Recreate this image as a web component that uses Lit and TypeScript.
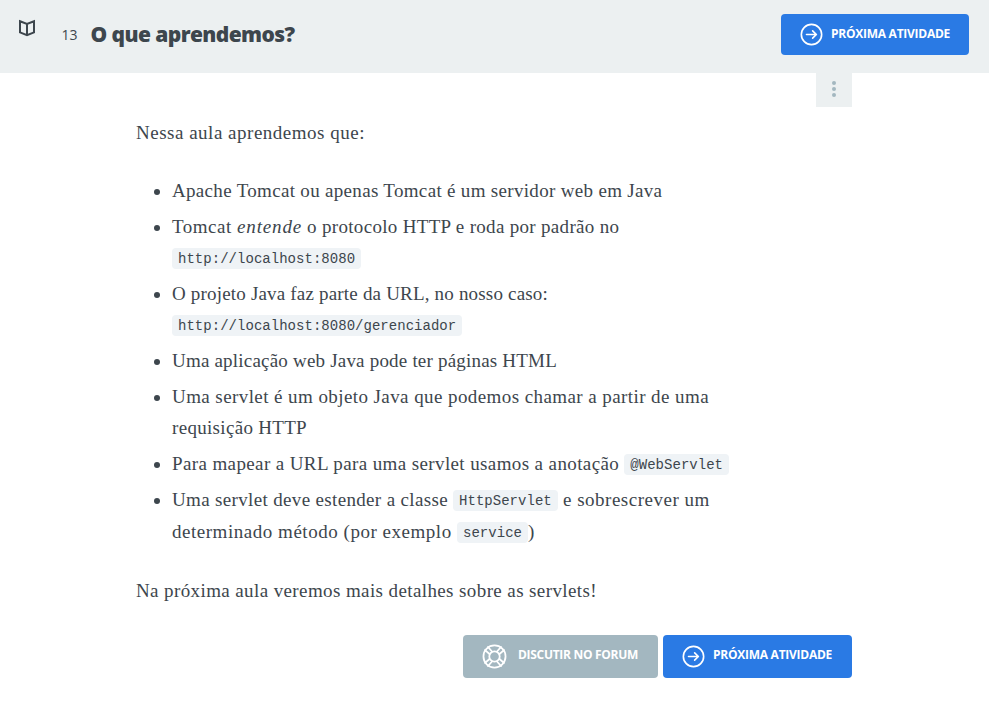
import { LitElement, html, svg, css } from "lit";
import { customElement, property } from "lit/decorators.js";
import { styleMap } from "lit/directives/style-map.js";

const ctx = document.createElement("canvas").getContext("2d")!;
const SERIF = '19px "Liberation Serif"';
const SERIF_ITALIC = 'italic 19px "Liberation Serif"';
const BUTTON = '700 12px "Open Sans"';
const TITLE = '800 21px "Open Sans"';

/** Tracking that makes a run of text as wide as its column slot. */
function tracking(text: string, width: number, font: string) {
  ctx.font = font;
  return { letterSpacing: `${((width - ctx.measureText(text).width) / text.length).toFixed(3)}px` };
}

const run = (text: string, width: number) =>
  html`<span class="run" style=${styleMap(tracking(text, width, SERIF))}>${text}</span>`;
const em = (text: string, width: number) =>
  html`<em class="run" style=${styleMap(tracking(text, width, SERIF_ITALIC))}>${text}</em>`;
const code = (text: string) => html`<code>${text}</code>`;

const arrowIcon = svg`<circle cx="12" cy="12" r="10.6"/><path d="M6.8 12h10M13.2 8.2l3.9 3.8-3.9 3.8"/>`;
const buoyIcon = svg`<circle cx="12" cy="12" r="10.6"/><circle cx="12" cy="12" r="5"/>
  <path d="M7.2 9.6L2.9 5.8M9.6 7.2L5.8 2.9M14.4 7.2l3.8-4.3M16.8 9.6l4.3-3.8M16.8 14.4l4.3 3.8M14.4 16.8l3.8 4.3M9.6 16.8l-3.8 4.3M7.2 14.4l-4.3 3.8"/>`;

@customElement("action-button")
class ActionButton extends LitElement {
  @property() kind = "next";
  @property() label = "";
  @property({ type: Number }) textWidth = 119;

  static styles = css`
    :host { display: block; }
    button {
      box-sizing: border-box; width: 100%; height: 100%; margin: 0; padding: 0 0 0 19px;
      border: 0; border-radius: 4px; background: #2a7ae4; color: #fff;
      display: flex; align-items: center; text-align: left;
      font: 700 12px/16px "Open Sans", sans-serif;
    }
    .forum { background: #a3b7c0; }
    svg { flex: none; width: 23px; height: 23px; fill: none; stroke: currentColor; stroke-width: 1.7; stroke-linecap: round; stroke-linejoin: round; margin-right: 8px; }
    .forum svg { width: 25px; height: 25px; stroke-width: 1.7; margin-right: 11px; }
    .text { white-space: nowrap; padding-bottom: var(--label-lift, 2px); }
  `;

  render() {
    return html`<button class=${this.kind}>
      <svg viewBox="0 0 24 24">${this.kind === "forum" ? buoyIcon : arrowIcon}</svg>
      <span class="text" style=${styleMap(tracking(this.label, this.textWidth, BUTTON))}>${this.label}</span>
    </button>`;
  }
}

@customElement("app-root")
class AppRoot extends LitElement {
  static styles = css`
    :host { display: block; height: 721px; overflow: hidden; background: #fff; color: #3d464d; }
    header {
      box-sizing: border-box; height: 73px; padding: 14px 20px 0 18px; background: #ecf0f1;
      display: flex; align-items: flex-start;
    }
    .book { width: 18px; height: 18px; margin-top: 5px; fill: none; stroke: #3d464d; stroke-width: 2; stroke-linejoin: miter; }
    .number { font: 14px/20px "Open Sans", sans-serif; margin: 11px 0 0 25.6px; width: 29px; }
    h1 { margin: 5px 0 0; font: 800 21px/30px "Open Sans", sans-serif; white-space: nowrap; flex: 1; }
    header action-button { width: 188px; height: 41px; }
    main { width: 716px; margin-left: 136px; }
    .menu {
      box-sizing: border-box;
      display: flex; flex-direction: column; align-items: center; justify-content: center; gap: 2.4px;
      width: 36px; height: 34px; margin-left: 680px; background: #ecf0f1;
      padding: 0 0 2px; border: 0;
    }
    .menu i { width: 4px; height: 4px; border-radius: 50%; background: #a3b7c0; }
    .prose { font: 19px/31px "Liberation Serif", serif; white-space: nowrap; }
    p { margin: 0; height: 31px; }
    .intro { margin-top: 10px; }
    ul { list-style: none; margin: 27px 0 28px; padding: 0 0 0 36px; display: flex; flex-direction: column; gap: 5px; }
    li { position: relative; }
    li::before { content: ""; position: absolute; left: -18.5px; top: 14px; width: 6px; height: 6px; border-radius: 50%; background: #3d464d; }
    .line { display: flex; align-items: center; height: 31px; }
    li:last-child .line + .line { margin-top: 1px; }
    .run { white-space: pre; }
    code {
      font: 14px/18px "Liberation Mono", monospace; height: 21px; box-sizing: border-box;
      padding: 2px 6px 1px; border-radius: 4px; background: #eff3f6; margin-top: 2px;
      letter-spacing: 0.03px;
    }
    .actions { display: flex; justify-content: flex-end; gap: 5px; margin-top: 29px; --label-lift: 4px; }
    .actions action-button { width: 189px; height: 43px; }
    .actions action-button[kind="forum"] { width: 195px; }
  `;

  render() {
    const items = [
      [[run("Apache Tomcat ou apenas Tomcat é um servidor web em Java", 491)]],
      [[run("Tomcat ", 65), em("entende", 65), run(" o protocolo HTTP e roda por padrão no", 318)], [code("http://localhost:8080")]],
      [[run("O projeto Java faz parte da URL, no nosso caso:", 376)], [code("http://localhost:8080/gerenciador")]],
      [[run("Uma aplicação web Java pode ter páginas HTML", 385)]],
      [[run("Uma servlet é um objeto Java que podemos chamar a partir de uma", 537)], [run("requisição HTTP", 135)]],
      [[run("Para mapear a URL para uma servlet usamos a anotação ", 453), code("@WebServlet")]],
      [
        [run("Uma servlet deve estender a classe ", 281), code("HttpServlet"), run(" e sobrescrever um", 152)],
        [run("determinado método (por exemplo ", 285), code("service"), run(")", 6)],
      ],
    ];
    const title = "O que aprendemos?";
    return html`
      <header>
        <svg class="book" viewBox="0 0 18 18"><path d="M2 2.2L9 5l7-2.8v11.2L9 16.2 2 13.4zM9 5v11"/></svg>
        <span class="number">13</span>
        <h1 style=${styleMap(tracking(title, 204, TITLE))}>${title}</h1>
        <action-button kind="next" label="PRÓXIMA ATIVIDADE" .textWidth=${119}></action-button>
      </header>
      <main>
        <button class="menu" aria-label="Menu"><i></i><i></i><i></i></button>
        <div class="prose">
          <p class="intro">${run("Nessa aula aprendemos que:", 229)}</p>
          <ul>
            ${items.map((lines) => html`<li>${lines.map((parts) => html`<div class="line">${parts}</div>`)}</li>`)}
          </ul>
          <p>${run("Na próxima aula veremos mais detalhes sobre as servlets!", 461)}</p>
        </div>
        <div class="actions">
          <action-button kind="forum" label="DISCUTIR NO FORUM" .textWidth=${120}></action-button>
          <action-button kind="next" label="PRÓXIMA ATIVIDADE" .textWidth=${119}></action-button>
        </div>
      </main>
    `;
  }
}
